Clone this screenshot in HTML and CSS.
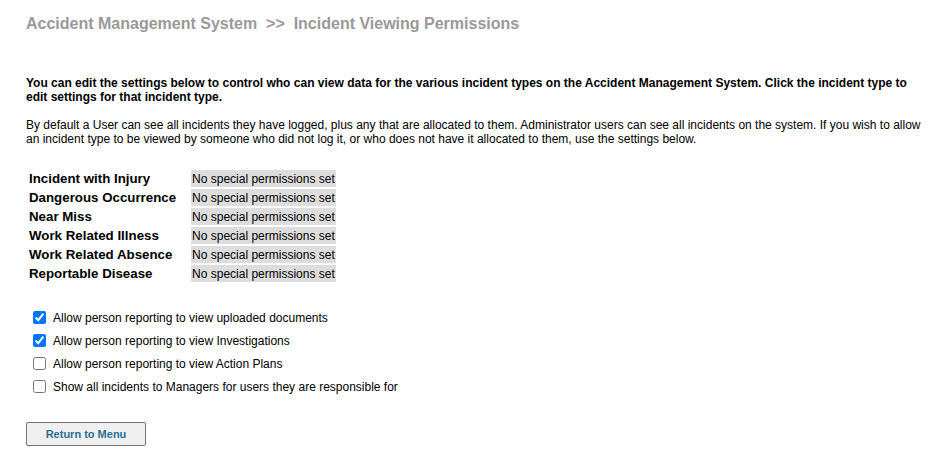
FILE: index.html
```html
<!DOCTYPE html>
<html>
<head>
<meta charset="utf-8">
<link rel="stylesheet" href="styles.css">
</head>
<body>
<div class="page">
  <h1 class="title">Accident Management System&nbsp; &gt;&gt;&nbsp; Incident Viewing Permissions</h1>
  <p class="intro">You can edit the settings below to control who can view data for the various incident types on the Accident Management System. Click the incident type to edit settings for that incident type.</p>
  <p class="note">By default a User can see all incidents they have logged, plus any that are allocated to them. Administrator users can see all incidents on the system. If you wish to allow an incident type to be viewed by someone who did not log it, or who does not have it allocated to them, use the settings below.</p>
  <table class="types">
    <tr><td class="label">Incident with Injury</td><td class="perm">No special permissions set</td></tr>
    <tr><td class="label">Dangerous Occurrence</td><td class="perm">No special permissions set</td></tr>
    <tr><td class="label">Near Miss</td><td class="perm">No special permissions set</td></tr>
    <tr><td class="label">Work Related Illness</td><td class="perm">No special permissions set</td></tr>
    <tr><td class="label">Work Related Absence</td><td class="perm">No special permissions set</td></tr>
    <tr><td class="label">Reportable Disease</td><td class="perm">No special permissions set</td></tr>
  </table>
  <div class="options">
    <label class="opt"><input type="checkbox" checked><span>Allow person reporting to view uploaded documents</span></label>
    <label class="opt"><input type="checkbox" checked><span>Allow person reporting to view Investigations</span></label>
    <label class="opt"><input type="checkbox"><span>Allow person reporting to view Action Plans</span></label>
    <label class="opt"><input type="checkbox"><span>Show all incidents to Managers for users they are responsible for</span></label>
  </div>
  <button class="btn" type="button">Return to Menu</button>
</div>
</body>
</html>
```
FILE: styles.css
```css
html, body {
  margin: 0;
  padding: 0;
  background: #ffffff;
}
body {
  font-family: "Liberation Sans", Arial, sans-serif;
  color: #000;
}
.page {
  padding: 14px 14px 0 26px;
}
.title {
  margin: 0;
  font-size: 16px;
  font-weight: bold;
  color: #999999;
  line-height: 20px;
}
.intro {
  margin: 42px 0 0 0;
  font-size: 12px;
  font-weight: bold;
  line-height: 14px;
}
.note {
  margin: 14px 0 0 0;
  font-size: 12px;
  line-height: 14px;
}
.types {
  margin: 22px 0 0 -1px;
  border-collapse: separate;
  border-spacing: 2px;
}
.types td {
  height: 17px;
}
.label {
  font-size: 13.3px;
  font-weight: bold;
  padding: 0 13px 0 2px;
}
.perm {
  font-size: 12px;
  background: #dddddd;
  padding: 0 1px;
}
.options {
  margin: 27px 0 0 0;
  display: flex;
  flex-direction: column;
  gap: 10px;
}
.opt {
  display: flex;
  align-items: center;
  font-size: 12px;
  height: 13px;
}
.opt input {
  margin: 0 7px 0 7px;
  width: 13px;
  height: 13px;
  accent-color: #0075ff;
}
.btn {
  margin-top: 29px;
  width: 120px;
  height: 24px;
  font-family: "Liberation Sans", Arial, sans-serif;
  font-size: 11px;
  font-weight: bold;
  color: #2a6f8f;
  background: #efefef;
  border: 1px solid #767676;
  border-radius: 2px;
}
```
